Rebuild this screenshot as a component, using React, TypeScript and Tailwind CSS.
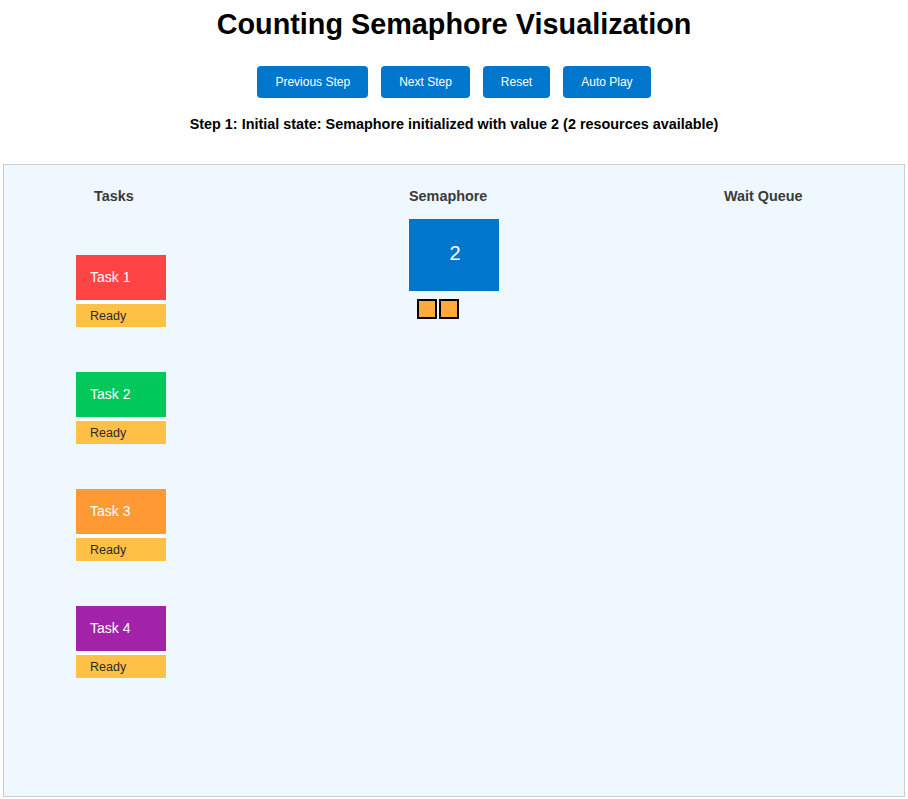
const tasks = [
  { name: "Task 1", color: "bg-[#ff4444]" },
  { name: "Task 2", color: "bg-[#00c85a]" },
  { name: "Task 3", color: "bg-[#ff9933]" },
  { name: "Task 4", color: "bg-[#a223a8]" },
];

const buttons = ["Previous Step", "Next Step", "Reset", "Auto Play"];

export default function App() {
  return (
    <div className="min-h-[799px] bg-white font-['Liberation_Sans',Arial,sans-serif] text-black">
      <h1 className="pt-[8px] text-center text-[28.8px] font-bold leading-[32px]">Counting Semaphore Visualization</h1>

      <div className="mt-[26px] flex justify-center gap-[13px]">
        {buttons.map((label) => (
          <button key={label} className="h-[32px] rounded-[4px] bg-[#0077cc] px-[18px] text-[12px] text-white">
            {label}
          </button>
        ))}
      </div>

      <p className="mt-[17px] text-center text-[14.4px] font-bold leading-[18px]">
        Step 1: Initial state: Semaphore initialized with value 2 (2 resources available)
      </p>

      <div className="mx-auto mt-[31px] h-[633px] w-[902px] border border-[#cccccc] bg-[#f0f8ff]">
        <div className="flex pl-[72px] pt-[23px]">
          {/* tasks column */}
          <div className="w-[333px]">
            <div className="ml-[18px] text-[14.4px] font-bold leading-[16px] text-[#3a3a3a]">Tasks</div>
            <div className="mt-[51px] flex flex-col gap-[45px]">
              {tasks.map((t) => (
                <div key={t.name} className="w-[90px]">
                  <div className={`flex h-[45px] items-center pl-[14px] text-[14px] text-white ${t.color}`}>{t.name}</div>
                  <div className="h-[4px] bg-white" />
                  <div className="flex h-[23px] items-center bg-[#ffc145] pl-[14px] pt-[2px] text-[12.5px] text-[#2a2a2a]">Ready</div>
                </div>
              ))}
            </div>
          </div>

          {/* semaphore column */}
          <div className="w-[315px]">
            <div className="text-[14.4px] font-bold leading-[16px] text-[#3a3a3a]">Semaphore</div>
            <div className="mt-[15px] flex h-[72px] w-[90px] items-center justify-center bg-[#0077cc] pb-[4px] pl-[2px] text-[20px] text-white">2</div>
            <div className="ml-[8px] mt-[8px] flex gap-[2px]">
              <div className="h-[20px] w-[20px] border-2 border-black bg-[#ffaa3c]" />
              <div className="h-[20px] w-[20px] border-2 border-black bg-[#ffaa3c]" />
            </div>
          </div>

          {/* wait queue column */}
          <div className="flex-1">
            <div className="text-[14.4px] font-bold leading-[16px] text-[#3a3a3a]">Wait Queue</div>
          </div>
        </div>
      </div>
    </div>
  );
}
